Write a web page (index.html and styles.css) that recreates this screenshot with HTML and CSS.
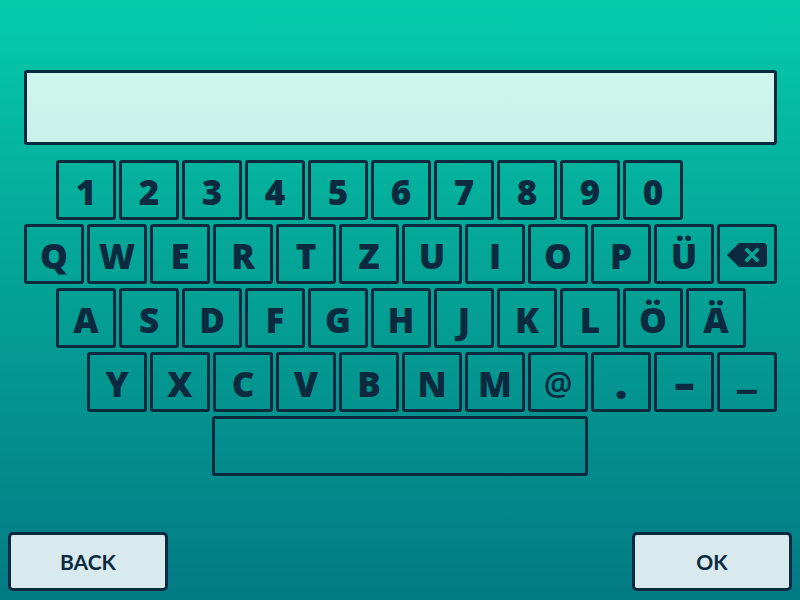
FILE: index.html
```html
<!DOCTYPE html>
<html>
<head>
<meta charset="utf-8">
<link rel="stylesheet" href="styles.css">
</head>
<body>
<div class="screen">
  <div class="input"></div>
  <div class="keyboard">
    <div class="row row-num">
      <div class="key">1</div><div class="key">2</div><div class="key">3</div><div class="key">4</div><div class="key">5</div><div class="key">6</div><div class="key">7</div><div class="key">8</div><div class="key">9</div><div class="key">0</div>
    </div>
    <div class="row row-q">
      <div class="key">Q</div><div class="key">W</div><div class="key">E</div><div class="key">R</div><div class="key">T</div><div class="key">Z</div><div class="key">U</div><div class="key">I</div><div class="key">O</div><div class="key">P</div><div class="key">Ü</div>
      <div class="key"><svg class="bksp" width="40" height="24" viewBox="0 0 40 24"><path d="M12 0 H36 Q40 0 40 4 V20 Q40 24 36 24 H12 L0 12 Z" fill="#0b2a40"/><path d="M20 7 L30 17 M30 7 L20 17" stroke="#04a596" stroke-width="3.6" stroke-linecap="square"/></svg></div>
    </div>
    <div class="row row-a">
      <div class="key">A</div><div class="key">S</div><div class="key">D</div><div class="key">F</div><div class="key">G</div><div class="key">H</div><div class="key">J</div><div class="key">K</div><div class="key">L</div><div class="key">Ö</div><div class="key">Ä</div>
    </div>
    <div class="row row-y">
      <div class="key">Y</div><div class="key">X</div><div class="key">C</div><div class="key">V</div><div class="key">B</div><div class="key">N</div><div class="key">M</div><div class="key at">@</div><div class="key dot">.</div><div class="key"><span class="dash">-</span></div><div class="key"><span class="under">_</span></div>
    </div>
    <div class="row row-space">
      <div class="key space"></div>
    </div>
  </div>
  <div class="footer">
    <div class="btn">BACK</div>
    <div class="btn">OK</div>
  </div>
</div>
</body>
</html>
```
FILE: styles.css
```css
html, body {
  margin: 0;
  padding: 0;
}
body {
  width: 800px;
  height: 600px;
  overflow: hidden;
  background: linear-gradient(to bottom, #05cbab 0%, #04a898 40%, #037a84 100%);
  font-family: "Open Sans", "DejaVu Sans", sans-serif;
  color: #0b2a40;
}
.screen {
  display: flex;
  flex-direction: column;
  height: 600px;
}
.input {
  box-sizing: border-box;
  margin: 70px 0 0 24px;
  width: 753px;
  height: 75px;
  border: 3px solid #0b2a40;
  border-radius: 3px;
  background: linear-gradient(to bottom, #d0f5ec, #cbf0ea);
}
.keyboard {
  display: flex;
  flex-direction: column;
  gap: 4px;
  margin-top: 15px;
}
.row {
  display: flex;
  gap: 3px;
}
.row-num { padding-left: 56px; }
.row-q { padding-left: 24px; }
.row-a { padding-left: 56px; }
.row-y { padding-left: 87px; }
.row-space { padding-left: 212px; }
.key {
  box-sizing: border-box;
  width: 60px;
  height: 60px;
  border: 3px solid #0b2a40;
  border-radius: 3px;
  display: flex;
  align-items: center;
  justify-content: center;
  font-size: 35px;
  font-weight: 800;
  line-height: 1;
  padding-top: 2px;
}
.key.at {
  font-weight: 600;
  font-size: 32px;
}
.key.dot {
  font-size: 44px;
  padding-top: 0;
}
.dash {
  display: inline-block;
  font-size: 40px;
  transform: scaleX(1.6);
}
.under {
  display: inline-block;
  font-size: 36px;
  transform: translateY(-9px) scaleX(1.1);
}
.key.space {
  width: 376px;
}
.footer {
  margin-top: auto;
  margin-bottom: 9px;
  padding: 0 8px;
  display: flex;
  justify-content: space-between;
}
.btn {
  box-sizing: border-box;
  width: 160px;
  height: 59px;
  border: 3px solid #0b2a40;
  border-radius: 5px;
  background: #d8eaee;
  display: flex;
  align-items: center;
  justify-content: center;
  font-family: "Lato", sans-serif;
  font-size: 21px;
  font-weight: 700;
}
```
